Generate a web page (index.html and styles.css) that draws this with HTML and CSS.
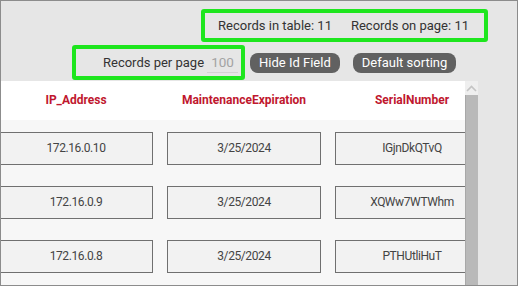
FILE: index.html
```html
<!DOCTYPE html>
<html lang="en">
<head>
    <meta charset="UTF-8">
    <title>Records</title>
    <link rel="stylesheet" href="styles.css">
</head>
<body>
    <div class="frame">
        <div class="stats-row">
            <div class="stats highlight">
                <span>Records in table: 11</span>
                <span>Records on page: 11</span>
            </div>
        </div>

        <div class="controls-row">
            <div class="per-page highlight">
                <span>Records per page</span>
                <span class="per-page-input">100</span>
            </div>
            <button class="pill">Hide Id Field</button>
            <button class="pill">Default sorting</button>
        </div>

        <div class="table-area">
            <div class="table-view">
                <div class="grid head">
                    <div>IP_Address</div>
                    <div>MaintenanceExpiration</div>
                    <div>SerialNumber</div>
                </div>
                <div class="rows">
                    <div class="grid row">
                        <div class="cell">172.16.0.10</div>
                        <div class="cell">3/25/2024</div>
                        <div class="cell">IGjnDkQTvQ</div>
                    </div>
                    <div class="grid row">
                        <div class="cell">172.16.0.9</div>
                        <div class="cell">3/25/2024</div>
                        <div class="cell">XQWw7WTWhm</div>
                    </div>
                    <div class="grid row">
                        <div class="cell">172.16.0.8</div>
                        <div class="cell">3/25/2024</div>
                        <div class="cell">PTHUtliHuT</div>
                    </div>
                </div>
            </div>
            <div class="scrollbar">
                <div class="scroll-up">
                    <svg width="11" height="7" viewBox="0 0 11 7"><path d="M1 6 L5.5 1.5 L10 6" fill="none" stroke="#c4c4c4" stroke-width="1.6"/></svg>
                </div>
                <div class="scroll-thumb"></div>
            </div>
        </div>
    </div>
</body>
</html>
```

FILE: styles.css
```css
body {
    margin: 0;
    font-family: Roboto, "Liberation Sans", sans-serif;
}
.frame {
    width: 518px;
    height: 286px;
    box-sizing: border-box;
    border: 1px solid #8c8c8c;
    background: #e6e6e6;
    overflow: hidden;
    display: flex;
    flex-direction: column;
}
.highlight {
    border: 4px solid #1ee61e;
    border-radius: 3px;
    display: flex;
    align-items: center;
    font-size: 13px;
    color: #333;
}
.stats-row {
    display: flex;
    justify-content: flex-end;
    padding: 8px 29px 0 0;
}
.stats {
    height: 25px;
    padding: 0 15px 0 13px;
    gap: 19px;
}
.controls-row {
    display: flex;
    align-items: center;
    padding: 3px 0 0 71px;
}
.per-page {
    height: 27px;
    padding-left: 27px;
    width: 138px;
}
.per-page-input {
    margin-left: 3px;
    width: 31px;
    height: 20px;
    line-height: 20px;
    text-align: center;
    font-size: 13.5px;
    color: #a3a3a3;
    border-bottom: 1px solid #d2d2d2;
}
.pill {
    height: 20px;
    margin-left: 13px;
    padding: 0 9px;
    border: none;
    border-radius: 8px;
    background: #616161;
    color: #fff;
    font-family: inherit;
    font-size: 13px;
}
.per-page + .pill {
    margin-left: 5px;
}
.table-area {
    flex: 1;
    display: flex;
    margin-top: 1px;
    min-height: 0;
}
.table-view {
    width: 464px;
    background: #fff;
    overflow: hidden;
}
.grid {
    display: grid;
    grid-template-columns: repeat(3, 168px);
    margin-left: -9px;
}
.head {
    height: 39px;
    line-height: 39px;
    text-align: center;
    font-size: 12px;
    font-weight: bold;
    color: #c0172e;
}
.rows {
    background: #f7f7f7;
    height: 100%;
}
.row {
    padding: 12px 0 9px;
}
.cell {
    margin: 0 7px;
    height: 33px;
    box-sizing: border-box;
    border: 1px solid #707070;
    background: #f2f2f2;
    line-height: 31px;
    text-align: center;
    font-size: 12px;
    letter-spacing: -0.4px;
    color: #444;
}
.scrollbar {
    width: 13px;
    background: #efefef;
    display: flex;
    flex-direction: column;
}
.scroll-up {
    height: 14px;
    display: flex;
    justify-content: center;
    align-items: center;
}
.scroll-thumb {
    flex: 1;
    background: #b9b9b9;
    border-left: 1px solid #a8a8a8;
}
```
